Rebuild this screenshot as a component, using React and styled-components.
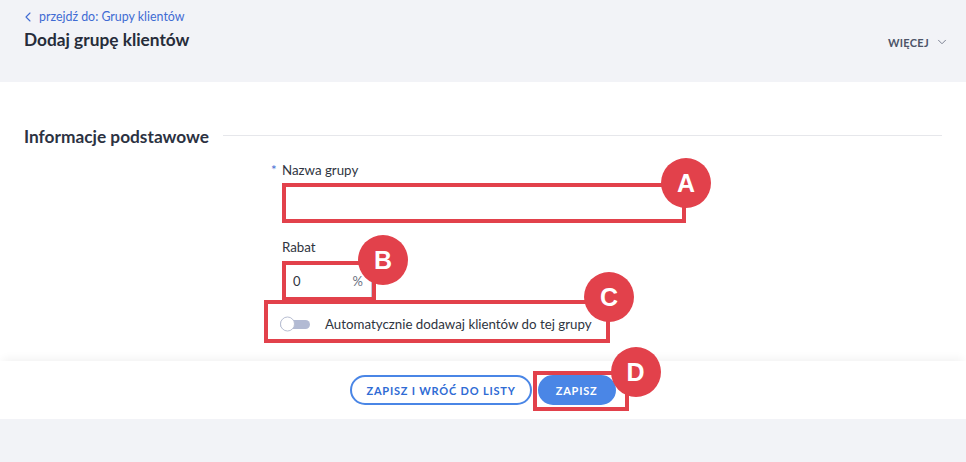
import styled, { createGlobalStyle } from 'styled-components';
import { ChevronLeft, ChevronDown } from 'lucide-react';

const Global = createGlobalStyle`
    body {
        margin: 0;
        background: #f2f3f7;
        font-family: Lato, "Open Sans", sans-serif;
        color: #2c3242;
    }
`

const Header = styled.header`
    height: 82px;
    box-sizing: border-box;
    padding: 8px 17px 0 24px;
    display: flex;
    justify-content: space-between;
    align-items: flex-start;
`
const BackLink = styled.a`
    display: flex;
    align-items: center;
    gap: 3px;
    height: 17px;
    font-size: 12.4px;
    color: #3f6bd3;
    text-decoration: none;
    margin-left: -4px;
`
const Title = styled.h1`
    margin: 4px 0 0;
    font-size: 17.3px;
    line-height: 22px;
    font-weight: 700;
    color: #262c3a;
`
const More = styled.button`
    margin-top: 27px;
    display: flex;
    align-items: center;
    gap: 6px;
    border: none;
    background: transparent;
    padding: 0;
    font-family: inherit;
    font-size: 11px;
    font-weight: 700;
    letter-spacing: 0.3px;
    color: #4d5468;
`

const Main = styled.main`
    background: #fff;
    padding: 44px 24px 18px;
`
const SectionHead = styled.div`
    display: flex;
    align-items: center;
    gap: 14px;
`
const SectionTitle = styled.h2`
    margin: 0;
    font-size: 17.3px;
    line-height: 22px;
    font-weight: 700;
    color: #2c3242;
    white-space: nowrap;
`
const Rule = styled.div`
    flex: 1;
    height: 1px;
    margin-top: -3px;
    background: #e6e7eb;
`
const Form = styled.div`
    margin-left: 258px;
    display: flex;
    flex-direction: column;
    align-items: flex-start;
`
const Label = styled.label`
    position: relative;
    display: block;
    margin-top: ${p => p.$gap}px;
    margin-bottom: 5px;
    font-size: 13.3px;
    line-height: 18px;
    color: #2f3541;
    &::before {
        content: ${p => (p.$required ? '"*"' : 'none')};
        position: absolute;
        left: -11px;
        color: #3f6bd3;
    }
`
const Input = styled.div`
    box-sizing: border-box;
    width: ${p => p.$w}px;
    height: 39px;
    border: 1px solid #c3c9da;
    border-radius: 3px;
    background: #fff;
    display: flex;
    align-items: center;
    justify-content: space-between;
    padding: 0 8px 0 10px;
    font-size: 13px;
    color: #2f3541;
`
const Suffix = styled.span`
    color: #6a7080;
`
const SwitchRow = styled.div`
    margin-top: 5px;
    height: 38px;
    display: flex;
    align-items: center;
    font-size: 13.3px;
    color: #2f3541;
`
const SwitchText = styled.span`
    white-space: nowrap;
`
const Switch = styled.span`
    position: relative;
    flex: none;
    width: 30px;
    height: 9px;
    margin: 0 15px 0 -2px;
    border-radius: 5px;
    background: #b2bad3;
    &::before {
        content: "";
        position: absolute;
        left: 0;
        top: 50%;
        width: 13px;
        height: 13px;
        transform: translateY(-50%);
        border-radius: 50%;
        background: #fff;
        border: 1px solid #b8bed2;
    }
`

const Footer = styled.footer`
    height: 58px;
    background: #fff;
    box-shadow: 0 -5px 9px -3px rgba(0, 0, 0, 0.06);
    display: flex;
    justify-content: center;
    align-items: center;
    gap: 6px;
`
const Button = styled.button`
    height: 30px;
    box-sizing: border-box;
    padding: 0 ${p => (p.$primary ? 16 : 14)}px;
    border-radius: 15px;
    border: 2px solid #4a86e6;
    background: ${p => (p.$primary ? '#4a86e6' : '#fff')};
    color: ${p => (p.$primary ? '#fff' : '#2f6bd4')};
    font-family: inherit;
    font-size: 11px;
    font-weight: 700;
    letter-spacing: 0.8px;
`

const Marked = styled.div`
    position: relative;
    width: max-content;
`
const Frame = styled.div`
    position: absolute;
    box-sizing: border-box;
    top: ${p => p.$t}px;
    bottom: ${p => p.$b}px;
    left: ${p => p.$l}px;
    ${p => (p.$w ? `width: ${p.$w}px;` : `right: ${p.$r}px;`)}
    border: 4px solid #e2414b;
    pointer-events: none;
`
const Badge = styled.span`
    position: absolute;
    top: ${p => -29 + p.$dy}px;
    right: ${p => -29 - p.$dx}px;
    width: 50px;
    height: 50px;
    border-radius: 50%;
    background: #e2414b;
    color: #fff;
    font-family: "Liberation Sans", Arial, sans-serif;
    font-weight: 700;
    font-size: 25px;
    display: flex;
    align-items: center;
    justify-content: center;
`

function Annotated({ letter, t = 0, r = 0, b = 0, l = 0, w, dx = 0, dy = 0, children }) {
    return (
        <Marked>
            {children}
            <Frame $t={t} $r={r} $b={b} $l={l} $w={w}>
                <Badge $dx={dx} $dy={dy}>{letter}</Badge>
            </Frame>
        </Marked>
    );
}

export default function App() {
    return (
        <>
            <Global />
            <Header>
                <div>
                    <BackLink href="#">
                        <ChevronLeft size={16} strokeWidth={1.6} />
                        przejdź do: Grupy klientów
                    </BackLink>
                    <Title>Dodaj grupę klientów</Title>
                </div>
                <More>
                    WIĘCEJ
                    <ChevronDown size={14} strokeWidth={1.5} color="#6b7183" />
                </More>
            </Header>

            <Main>
                <SectionHead>
                    <SectionTitle>Informacje podstawowe</SectionTitle>
                    <Rule />
                </SectionHead>

                <Form>
                    <Label $required $gap={13}>Nazwa grupy</Label>
                    <Annotated letter="A" t={-1} r={-1} b={0} l={0}>
                        <Input $w={403} />
                    </Annotated>

                    <Label $gap={15}>Rabat</Label>
                    <Annotated letter="B" t={0} r={-4} b={-1} l={0} dx={7} dy={-1}>
                        <Input $w={90}>
                            0<Suffix>%</Suffix>
                        </Input>
                    </Annotated>

                    <Annotated letter="C" t={0} b={0} l={-18} w={346} dx={-1} dy={-3}>
                        <SwitchRow>
                            <Switch />
                            <SwitchText>Automatycznie dodawaj klientów do tej grupy</SwitchText>
                        </SwitchRow>
                    </Annotated>
                </Form>
            </Main>

            <Footer>
                <Button>ZAPISZ I WRÓĆ DO LISTY</Button>
                <Annotated letter="D" t={-4} r={-13} b={-6} l={-5} dx={7} dy={1}>
                    <Button $primary>ZAPISZ</Button>
                </Annotated>
            </Footer>
        </>
    );
}
